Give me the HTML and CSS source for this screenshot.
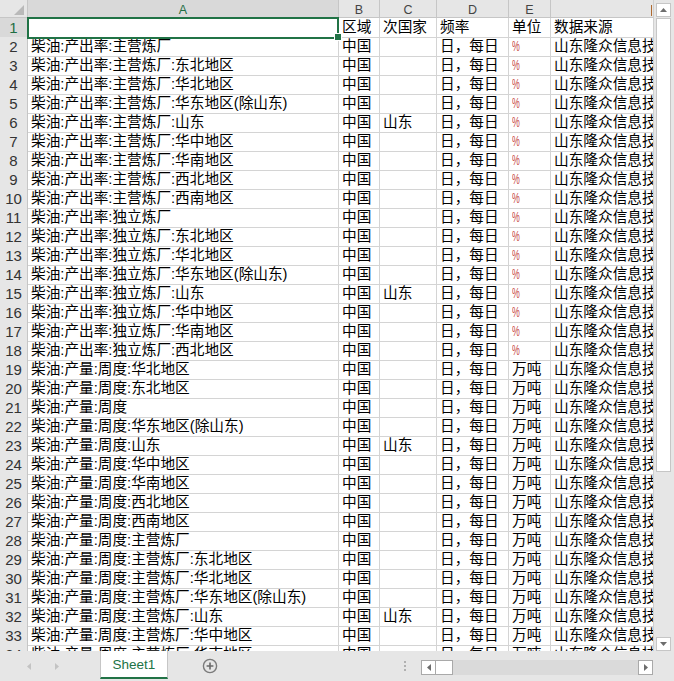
FILE: index.html
```html
<!DOCTYPE html>
<html lang="zh">
<head>
<meta charset="utf-8">
<title>Sheet1</title>
<link rel="stylesheet" href="styles.css">
</head>
<body>
<div class="app">
  <div class="main">
    <div class="sheet">
      <div class="row head">
        <div class="corner"><span class="tri"></span></div>
        <div class="ch selh">A</div>
        <div class="ch">B</div>
        <div class="ch">C</div>
        <div class="ch">D</div>
        <div class="ch">E</div>
        <div class="ch last"></div>
      </div>
      <div class="row"><div class="rh selh">1</div><div class="c sel"></div><div class="c">区域</div><div class="c">次国家</div><div class="c">频率</div><div class="c">单位</div><div class="c">数据来源</div></div>
      <div class="row"><div class="rh">2</div><div class="c">柴油:产出率:主营炼厂</div><div class="c">中国</div><div class="c"></div><div class="c">日，每日</div><div class="c"><span class="pct">%</span></div><div class="c">山东隆众信息技术有限公司</div></div>
      <div class="row"><div class="rh">3</div><div class="c">柴油:产出率:主营炼厂:东北地区</div><div class="c">中国</div><div class="c"></div><div class="c">日，每日</div><div class="c"><span class="pct">%</span></div><div class="c">山东隆众信息技术有限公司</div></div>
      <div class="row"><div class="rh">4</div><div class="c">柴油:产出率:主营炼厂:华北地区</div><div class="c">中国</div><div class="c"></div><div class="c">日，每日</div><div class="c"><span class="pct">%</span></div><div class="c">山东隆众信息技术有限公司</div></div>
      <div class="row"><div class="rh">5</div><div class="c">柴油:产出率:主营炼厂:华东地区(除山东)</div><div class="c">中国</div><div class="c"></div><div class="c">日，每日</div><div class="c"><span class="pct">%</span></div><div class="c">山东隆众信息技术有限公司</div></div>
      <div class="row"><div class="rh">6</div><div class="c">柴油:产出率:主营炼厂:山东</div><div class="c">中国</div><div class="c">山东</div><div class="c">日，每日</div><div class="c"><span class="pct">%</span></div><div class="c">山东隆众信息技术有限公司</div></div>
      <div class="row"><div class="rh">7</div><div class="c">柴油:产出率:主营炼厂:华中地区</div><div class="c">中国</div><div class="c"></div><div class="c">日，每日</div><div class="c"><span class="pct">%</span></div><div class="c">山东隆众信息技术有限公司</div></div>
      <div class="row"><div class="rh">8</div><div class="c">柴油:产出率:主营炼厂:华南地区</div><div class="c">中国</div><div class="c"></div><div class="c">日，每日</div><div class="c"><span class="pct">%</span></div><div class="c">山东隆众信息技术有限公司</div></div>
      <div class="row"><div class="rh">9</div><div class="c">柴油:产出率:主营炼厂:西北地区</div><div class="c">中国</div><div class="c"></div><div class="c">日，每日</div><div class="c"><span class="pct">%</span></div><div class="c">山东隆众信息技术有限公司</div></div>
      <div class="row"><div class="rh">10</div><div class="c">柴油:产出率:主营炼厂:西南地区</div><div class="c">中国</div><div class="c"></div><div class="c">日，每日</div><div class="c"><span class="pct">%</span></div><div class="c">山东隆众信息技术有限公司</div></div>
      <div class="row"><div class="rh">11</div><div class="c">柴油:产出率:独立炼厂</div><div class="c">中国</div><div class="c"></div><div class="c">日，每日</div><div class="c"><span class="pct">%</span></div><div class="c">山东隆众信息技术有限公司</div></div>
      <div class="row"><div class="rh">12</div><div class="c">柴油:产出率:独立炼厂:东北地区</div><div class="c">中国</div><div class="c"></div><div class="c">日，每日</div><div class="c"><span class="pct">%</span></div><div class="c">山东隆众信息技术有限公司</div></div>
      <div class="row"><div class="rh">13</div><div class="c">柴油:产出率:独立炼厂:华北地区</div><div class="c">中国</div><div class="c"></div><div class="c">日，每日</div><div class="c"><span class="pct">%</span></div><div class="c">山东隆众信息技术有限公司</div></div>
      <div class="row"><div class="rh">14</div><div class="c">柴油:产出率:独立炼厂:华东地区(除山东)</div><div class="c">中国</div><div class="c"></div><div class="c">日，每日</div><div class="c"><span class="pct">%</span></div><div class="c">山东隆众信息技术有限公司</div></div>
      <div class="row"><div class="rh">15</div><div class="c">柴油:产出率:独立炼厂:山东</div><div class="c">中国</div><div class="c">山东</div><div class="c">日，每日</div><div class="c"><span class="pct">%</span></div><div class="c">山东隆众信息技术有限公司</div></div>
      <div class="row"><div class="rh">16</div><div class="c">柴油:产出率:独立炼厂:华中地区</div><div class="c">中国</div><div class="c"></div><div class="c">日，每日</div><div class="c"><span class="pct">%</span></div><div class="c">山东隆众信息技术有限公司</div></div>
      <div class="row"><div class="rh">17</div><div class="c">柴油:产出率:独立炼厂:华南地区</div><div class="c">中国</div><div class="c"></div><div class="c">日，每日</div><div class="c"><span class="pct">%</span></div><div class="c">山东隆众信息技术有限公司</div></div>
      <div class="row"><div class="rh">18</div><div class="c">柴油:产出率:独立炼厂:西北地区</div><div class="c">中国</div><div class="c"></div><div class="c">日，每日</div><div class="c"><span class="pct">%</span></div><div class="c">山东隆众信息技术有限公司</div></div>
      <div class="row"><div class="rh">19</div><div class="c">柴油:产量:周度:华北地区</div><div class="c">中国</div><div class="c"></div><div class="c">日，每日</div><div class="c">万吨</div><div class="c">山东隆众信息技术有限公司</div></div>
      <div class="row"><div class="rh">20</div><div class="c">柴油:产量:周度:东北地区</div><div class="c">中国</div><div class="c"></div><div class="c">日，每日</div><div class="c">万吨</div><div class="c">山东隆众信息技术有限公司</div></div>
      <div class="row"><div class="rh">21</div><div class="c">柴油:产量:周度</div><div class="c">中国</div><div class="c"></div><div class="c">日，每日</div><div class="c">万吨</div><div class="c">山东隆众信息技术有限公司</div></div>
      <div class="row"><div class="rh">22</div><div class="c">柴油:产量:周度:华东地区(除山东)</div><div class="c">中国</div><div class="c"></div><div class="c">日，每日</div><div class="c">万吨</div><div class="c">山东隆众信息技术有限公司</div></div>
      <div class="row"><div class="rh">23</div><div class="c">柴油:产量:周度:山东</div><div class="c">中国</div><div class="c">山东</div><div class="c">日，每日</div><div class="c">万吨</div><div class="c">山东隆众信息技术有限公司</div></div>
      <div class="row"><div class="rh">24</div><div class="c">柴油:产量:周度:华中地区</div><div class="c">中国</div><div class="c"></div><div class="c">日，每日</div><div class="c">万吨</div><div class="c">山东隆众信息技术有限公司</div></div>
      <div class="row"><div class="rh">25</div><div class="c">柴油:产量:周度:华南地区</div><div class="c">中国</div><div class="c"></div><div class="c">日，每日</div><div class="c">万吨</div><div class="c">山东隆众信息技术有限公司</div></div>
      <div class="row"><div class="rh">26</div><div class="c">柴油:产量:周度:西北地区</div><div class="c">中国</div><div class="c"></div><div class="c">日，每日</div><div class="c">万吨</div><div class="c">山东隆众信息技术有限公司</div></div>
      <div class="row"><div class="rh">27</div><div class="c">柴油:产量:周度:西南地区</div><div class="c">中国</div><div class="c"></div><div class="c">日，每日</div><div class="c">万吨</div><div class="c">山东隆众信息技术有限公司</div></div>
      <div class="row"><div class="rh">28</div><div class="c">柴油:产量:周度:主营炼厂</div><div class="c">中国</div><div class="c"></div><div class="c">日，每日</div><div class="c">万吨</div><div class="c">山东隆众信息技术有限公司</div></div>
      <div class="row"><div class="rh">29</div><div class="c">柴油:产量:周度:主营炼厂:东北地区</div><div class="c">中国</div><div class="c"></div><div class="c">日，每日</div><div class="c">万吨</div><div class="c">山东隆众信息技术有限公司</div></div>
      <div class="row"><div class="rh">30</div><div class="c">柴油:产量:周度:主营炼厂:华北地区</div><div class="c">中国</div><div class="c"></div><div class="c">日，每日</div><div class="c">万吨</div><div class="c">山东隆众信息技术有限公司</div></div>
      <div class="row"><div class="rh">31</div><div class="c">柴油:产量:周度:主营炼厂:华东地区(除山东)</div><div class="c">中国</div><div class="c"></div><div class="c">日，每日</div><div class="c">万吨</div><div class="c">山东隆众信息技术有限公司</div></div>
      <div class="row"><div class="rh">32</div><div class="c">柴油:产量:周度:主营炼厂:山东</div><div class="c">中国</div><div class="c">山东</div><div class="c">日，每日</div><div class="c">万吨</div><div class="c">山东隆众信息技术有限公司</div></div>
      <div class="row"><div class="rh">33</div><div class="c">柴油:产量:周度:主营炼厂:华中地区</div><div class="c">中国</div><div class="c"></div><div class="c">日，每日</div><div class="c">万吨</div><div class="c">山东隆众信息技术有限公司</div></div>
      <div class="row"><div class="rh">34</div><div class="c">柴油:产量:周度:主营炼厂:华南地区</div><div class="c">中国</div><div class="c"></div><div class="c">日，每日</div><div class="c">万吨</div><div class="c">山东隆众信息技术有限公司</div></div>
    </div>
    <div class="vscroll">
      <div class="sbtn"><svg width="7" height="4" viewBox="0 0 7 4"><path d="M0 4 L3.5 0 L7 4 Z" fill="#6d6d6d"/></svg></div>
      <div class="vthumb"></div>
      <div class="vtrack"></div>
      <div class="sbtn"><svg width="7" height="4" viewBox="0 0 7 4"><path d="M0 0 L3.5 4 L7 0 Z" fill="#6d6d6d"/></svg></div>
    </div>
  </div>
  <div class="tabbar">
    <div class="nav">
      <svg class="navl" width="4" height="7" viewBox="0 0 4 7"><path d="M4 0 L0 3.5 L4 7 Z" fill="#c3c3c3"/></svg>
      <svg class="navr" width="4" height="7" viewBox="0 0 4 7"><path d="M0 0 L4 3.5 L0 7 Z" fill="#c3c3c3"/></svg>
    </div>
    <div class="tab">Sheet1</div>
    <div class="add"><svg width="16" height="16" viewBox="0 0 16 16"><circle cx="8" cy="8" r="6.6" fill="none" stroke="#7a7a7a" stroke-width="1.4"/><path d="M8 4.6 V11.4 M4.6 8 H11.4" stroke="#6a6a6a" stroke-width="1.6"/></svg></div>
    <div class="split"><span></span><span></span><span></span></div>
    <div class="hscroll">
      <div class="hbtn"><svg width="4" height="7" viewBox="0 0 4 7"><path d="M4 0 L0 3.5 L4 7 Z" fill="#6d6d6d"/></svg></div>
      <div class="hthumb"></div>
      <div class="htrack"></div>
      <div class="hbtn"><svg width="4" height="7" viewBox="0 0 4 7"><path d="M0 0 L4 3.5 L0 7 Z" fill="#6d6d6d"/></svg></div>
    </div>
  </div>
</div>
</body>
</html>
```
FILE: styles.css
```css
* { box-sizing: border-box; }
html, body { margin: 0; padding: 0; background: #fff; }
body {
  font-family: "Liberation Sans", "Noto Sans CJK SC", sans-serif;
  color: #000;
}
.app {
  width: 674px;
  height: 681px;
  display: flex;
  flex-direction: column;
  overflow: hidden;
}
.main {
  height: 651px;
  display: flex;
  flex-direction: row;
  overflow: hidden;
}
.sheet {
  width: 653px;
  height: 651px;
  overflow: hidden;
  flex: none;
}
.row {
  display: grid;
  grid-template-columns: 28px 311px 41px 57px 72px 42px 140px;
  height: 19px;
}
.row.head { height: 18px; }
.corner {
  background: #e6e6e6;
  border-right: 1px solid #c6c6c6;
  border-bottom: 1px solid #c6c6c6;
  display: flex;
  justify-content: flex-end;
  align-items: flex-end;
  padding: 0 3px 2px 0;
}
.tri {
  width: 0;
  height: 0;
  border-left: 10px solid transparent;
  border-bottom: 10px solid #b9b9b9;
}
.ch {
  background: #e6e6e6;
  border-right: 1px solid #c6c6c6;
  border-bottom: 1px solid #c6c6c6;
  text-align: center;
  font-size: 12.5px;
  line-height: 20px;
  color: #444;
  overflow: hidden;
}
.ch.last { border-right: none; position: relative; }
.ch.last::after {
  content: "";
  position: absolute;
  left: 100px;
  top: 5px;
  width: 1px;
  height: 11px;
  background: #b06a30;
}
.rh {
  background: #e6e6e6;
  border-right: 1px solid #c6c6c6;
  border-bottom: 1px solid #c6c6c6;
  text-align: center;
  font-size: 15px;
  line-height: 19px;
  color: #333;
}
.selh { background: #d9d9d9; color: #1f6e43; }
.c {
  border-right: 1px solid #d4d4d4;
  border-bottom: 1px solid #d4d4d4;
  font-size: 14.67px;
  line-height: 19px;
  padding-left: 3px;
  white-space: nowrap;
  overflow: hidden;
}
.c.sel { position: relative; overflow: visible; }
.c.sel::before {
  content: "";
  position: absolute;
  left: -1px;
  top: -1px;
  right: -1px;
  bottom: -2px;
  border: 2px solid #217346;
}
.c.sel::after {
  content: "";
  position: absolute;
  right: -4px;
  bottom: -4px;
  width: 6px;
  height: 6px;
  background: #217346;
  border: 1px solid #fff;
}
.pct {
  display: inline-block;
  color: #c8504a;
  transform: scaleX(0.6);
  transform-origin: left center;
}
.vscroll {
  flex: 1;
  background: #e6e6e6;
  border-left: 1px solid #d0d0d0;
  display: flex;
  flex-direction: column;
  padding: 3px 3px 0 2px;
}
.sbtn {
  height: 14px;
  width: 15px;
  background: #fff;
  border: 1px solid #c6c6c6;
  display: flex;
  align-items: center;
  justify-content: center;
  flex: none;
}
.vthumb {
  height: 454px;
  width: 15px;
  margin-top: 1px;
  background: #fff;
  border: 1px solid #c6c6c6;
  flex: none;
}
.vtrack { flex: 1; }
.tabbar {
  height: 30px;
  background: #e6e6e6;
  display: flex;
  flex-direction: row;
  align-items: flex-start;
}
.nav {
  width: 100px;
  height: 30px;
  display: flex;
  align-items: center;
  flex: none;
}
.navl { margin-left: 27px; }
.navr { margin-left: 24px; }
.tab {
  width: 68px;
  height: 28px;
  background: #fff;
  border-left: 1px solid #c6c6c6;
  border-right: 1px solid #c6c6c6;
  border-bottom: 2px solid #217346;
  color: #217346;
  font-size: 13.5px;
  line-height: 27px;
  text-align: center;
  flex: none;
}
.add {
  margin-left: 34px;
  margin-top: 7px;
  width: 16px;
  height: 16px;
  flex: none;
}
.split {
  margin-left: 186px;
  margin-top: 10px;
  width: 2px;
  display: flex;
  flex-direction: column;
  gap: 2px;
  flex: none;
}
.split span {
  width: 2px;
  height: 2px;
  background: #b0b0b0;
}
.hscroll {
  margin-left: 15px;
  margin-top: 9px;
  width: 232px;
  height: 15px;
  display: flex;
  flex-direction: row;
  flex: none;
}
.hbtn {
  width: 15px;
  height: 15px;
  background: #fff;
  border: 1px solid #a9a9a9;
  display: flex;
  align-items: center;
  justify-content: center;
  flex: none;
}
.hthumb {
  width: 17px;
  height: 15px;
  background: #fff;
  border: 1px solid #a9a9a9;
  border-left: none;
  flex: none;
}
.htrack {
  flex: 1;
  background: #dadada;
}
```
